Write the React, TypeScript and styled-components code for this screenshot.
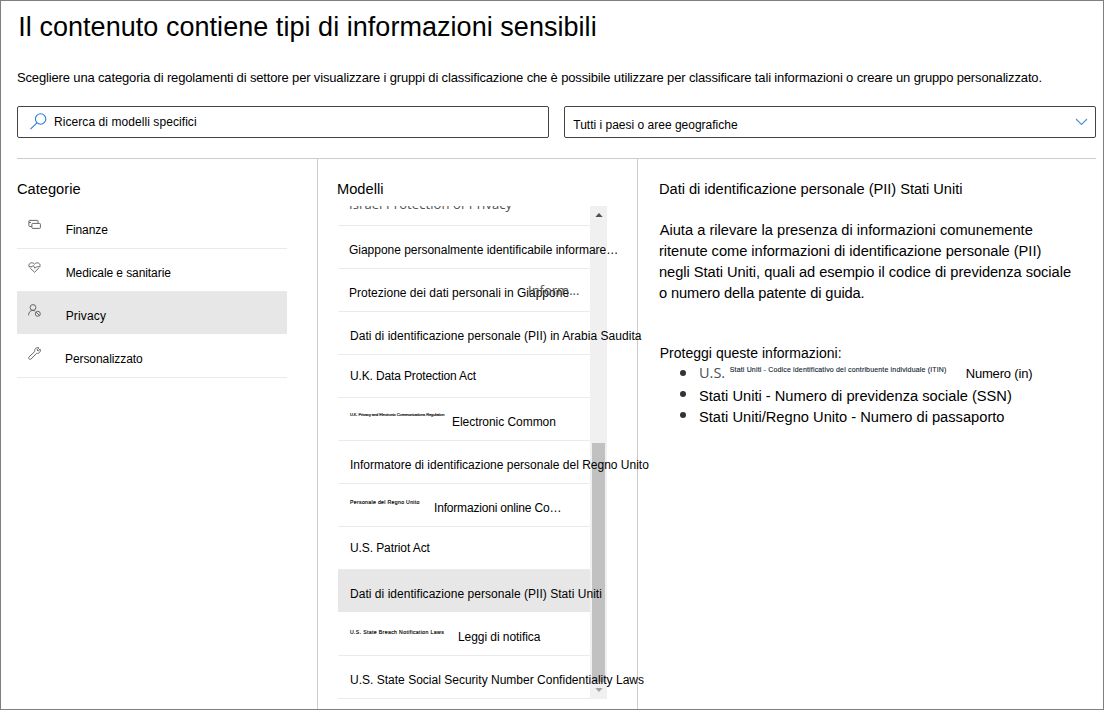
import React from 'react';
import styled, { createGlobalStyle } from 'styled-components';

const GlobalStyle = createGlobalStyle`
  *, *::before, *::after { box-sizing: border-box; }
  body {
    margin: 0;
    background: #fff;
    color: #000;
    font-family: "Liberation Sans", Arial, sans-serif;
  }
  svg { display: block; flex: none; }
`;

const Page = styled.div`
  width: 1104px;
  height: 710px;
  padding: 11px 7px 0 16px;
  border: 1px solid #7f7f7f;
  display: flex;
  flex-direction: column;
  overflow: hidden;
`;

const Title = styled.h1`
  margin: 0 0 0 1.3px;
  font-size: 27px;
  font-weight: 400;
  line-height: 30px;
  letter-spacing: 0.04px;
  white-space: nowrap;
`;

const Intro = styled.p`
  margin: 28px 0 0;
  font-size: 13px;
  line-height: 15px;
  letter-spacing: -0.15px;
  white-space: nowrap;
`;

const Filters = styled.div`
  margin-top: 21px;
  display: grid;
  grid-template-columns: 532px 532px;
  column-gap: 15px;
`;

const Field = styled.div`
  height: 32px;
  border: 1px solid #444;
  border-radius: 2px;
  display: flex;
  align-items: flex-start;
`;

const SearchField = styled(Field)`
  padding: 6px 0 0 12px;
  gap: 7px;
`;

const SelectField = styled(Field)`
  padding: 10px 7px 0 8.3px;
  justify-content: space-between;
`;

const Label = styled.span<{ $track?: number }>`
  font-size: 12px;
  line-height: 16px;
  letter-spacing: ${p => p.$track ?? 0}px;
  white-space: nowrap;
`;

const SearchLabel = styled(Label)`
  margin-top: 1px;
`;

const Columns = styled.main`
  margin-top: 20px;
  border-top: 1px solid #ccc;
  flex: 1;
  display: grid;
  grid-template-columns: 301px 320px 1fr;
`;

const Column = styled.section<{ $indent?: number }>`
  padding: 20px 0 0 ${p => p.$indent ?? 0}px;
  border-right: 1px solid #ccc;
  min-width: 0;
`;

const DetailColumn = styled(Column)`
  border-right: 0;
`;

const Heading = styled.h2<{ $shift?: number; $track?: number }>`
  margin: 0 0 0 ${p => p.$shift ?? 0}px;
  font-size: 14.67px;
  font-weight: 400;
  line-height: 21px;
  letter-spacing: ${p => p.$track ?? 0}px;
  white-space: nowrap;
`;

const CategoryList = styled.div`
  margin-top: 6px;
  width: 270px;
`;

const ListRow = styled.div<{ $selected?: boolean }>`
  height: 43px;
  display: flex;
  align-items: flex-start;
  background: ${p => (p.$selected ? '#e7e7e7' : 'transparent')};
  background-clip: padding-box;
  border-bottom: 1px solid ${p => (p.$selected ? 'transparent' : '#eaeaea')};
`;

const CategoryRow = styled(ListRow)<{ $textStart: number }>`
  padding: 12px 0 0 11px;
  gap: ${p => p.$textStart - 41}px;
  ${Label} { margin-top: 4px; }
`;

const ModelPanel = styled.div`
  margin-top: 6px;
  height: 493px;
  display: flex;
`;

/* Wider than its rows so that long names can run across the scrollbar. */
const ModelViewport = styled.div`
  flex: none;
  width: 320px;
  height: 493px;
  margin-right: -68px;
  overflow: hidden;
  position: relative;
  z-index: 1;
`;

const ModelRows = styled.div`
  width: 252px;
  margin-top: -23px;
`;

const ModelRow = styled(ListRow)<{ $top?: number; $left?: number }>`
  position: relative;
  padding: ${p => p.$top ?? 16}px 0 0 ${p => p.$left ?? 12}px;
`;

const FadedText = styled.span<{ $size: number; $track?: number }>`
  font-family: "Open Sans", "Noto Sans", sans-serif;
  font-size: ${p => p.$size}px;
  line-height: 18px;
  letter-spacing: ${p => p.$track ?? 0}px;
  color: #505050;
  white-space: nowrap;
`;

const OverlaidText = styled(FadedText)`
  position: absolute;
  left: 190px;
  top: 12px;
`;

const TinyText = styled.span<{ $size: number; $track: number; $top: number; $width: number }>`
  flex: none;
  width: ${p => p.$width}px;
  margin-top: ${p => p.$top}px;
  font-size: ${p => p.$size}px;
  line-height: 6px;
  letter-spacing: ${p => p.$track}px;
  -webkit-text-stroke: 0.15px #000;
  white-space: nowrap;
`;

const Scrollbar = styled.div`
  flex: none;
  width: 17px;
  background: #f0f0f0;
  display: flex;
  flex-direction: column;
  align-items: center;
`;

const Thumb = styled.div`
  margin-top: 226px;
  width: 13px;
  height: 239px;
  background: #c1c1c1;
`;

const Paragraph = styled.p`
  margin: 20px 0 0;
  font-size: 14.67px;
  line-height: 21px;
`;

const Line = styled.span<{ $track: number; $shift?: number }>`
  display: block;
  padding-left: ${p => p.$shift ?? 0}px;
  letter-spacing: ${p => p.$track}px;
  white-space: nowrap;
`;

const Subheading = styled.h3`
  margin: 41px 0 2px 0.7px;
  font-size: 14px;
  font-weight: 400;
  line-height: 16px;
  letter-spacing: 0.02px;
`;

const Bullets = styled.ul`
  list-style: none;
  margin: 0;
  padding: 0 0 0 21px;
`;

const Bullet = styled.li<{ $height?: number; $dot?: number }>`
  height: ${p => p.$height ?? 21}px;
  display: flex;
  align-items: flex-start;
  font-size: 14.67px;
  line-height: 21px;
  white-space: nowrap;
  &::before {
    content: "";
    flex: none;
    width: 6px;
    height: 6px;
    margin: ${p => p.$dot ?? 5}px 13px 0 0;
    border-radius: 50%;
    background: #333;
  }
`;

const Prefix = styled(FadedText)`
  width: 30.7px;
  margin-top: 1px;
`;

const Fine = styled.span`
  width: 236px;
  margin-top: 3px;
  font-size: 7px;
  line-height: 8px;
  letter-spacing: 0.166px;
  color: #0b1a2c;
  -webkit-text-stroke: 0.1px #0b1a2c;
`;

const Trailing = styled.span`
  margin-top: 3px;
  font-size: 13px;
  line-height: 15px;
  letter-spacing: -0.18px;
`;

const Glyph = ({ children }: { children: React.ReactNode }) => (
  <svg width="13" height="13" viewBox="0 0 13 13" fill="none" stroke="#606060" strokeWidth="0.95">
    {children}
  </svg>
);

const CardsIcon = () => (
  <Glyph>
    <path d="M3.8 8.5H1.5Q.9 8.5.9 7.9V3Q.9 2.4 1.5 2.4H9.4Q10 2.4 10 3V4.9M.9 4.4H3" />
    <rect x="3.9" y="5.4" width="8.5" height="5" rx="0.8" />
  </Glyph>
);

const HeartIcon = () => (
  <Glyph>
    <path d="M1.2 5.7C-.2 2.7 3.7.1 6.5 3.2 9.3.1 13.2 2.7 11.8 5.7" />
    <path d="M2.3 7.2 6.5 11.2 10.7 7.2M.8 5.8H4L5.2 4.4 7 7.3 8.5 5.8H12.2" />
  </Glyph>
);

const PersonIcon = () => (
  <Glyph>
    <circle cx="5" cy="3.5" r="2.9" />
    <path d="M.6 11.3C.6 8.2 2.4 6.4 5 6.4Q6.3 6.4 7.2 7.1" />
    <circle cx="9.8" cy="9.8" r="2.5" />
    <path d="M8.1 8.1 11.5 11.5" />
  </Glyph>
);

const WrenchIcon = () => (
  <Glyph>
    <path d="M10.9.9C8.6-.1 6 1.9 6.8 4.5L1.1 9.8C-.3 11.3 1.7 13.3 3.2 11.9L8.6 6.3C11 7 13.2 4.4 12.1 2.1L10.1 4 8.9 2.9Z" />
  </Glyph>
);

const SearchIcon = () => (
  <svg width="17" height="18" viewBox="0 0 17 18" fill="none" stroke="#2b7cd3" strokeWidth="1.1">
    <circle cx="10.6" cy="6" r="5.2" />
    <path d="M6.9 9.8.5 16.2" />
  </svg>
);

const ChevronIcon = () => (
  <svg width="13" height="9" viewBox="0 0 13 9" fill="none" stroke="#4a93cf" strokeWidth="1.1">
    <path d="M1 2 6.5 7.5 12 2" />
  </svg>
);

const ArrowUp = () => (
  <svg width="8" height="11" viewBox="0 0 8 11" fill="#505050">
    <path d="M.3 11 4 7 7.7 11Z" />
  </svg>
);

const ArrowDown = () => (
  <svg width="8" height="11" viewBox="0 0 8 11" fill="#a3a3a3">
    <path d="M.3 6 4 10 7.7 6Z" />
  </svg>
);

const categories = [
  { name: 'Finanze', icon: <CardsIcon />, start: 65.7, track: -0.08 },
  { name: 'Medicale e sanitarie', icon: <HeartIcon />, start: 65.7, track: -0.08 },
  { name: 'Privacy', icon: <PersonIcon />, start: 65.7, track: 0.15, selected: true },
  { name: 'Personalizzato', icon: <WrenchIcon />, start: 65, track: -0.08 },
];

export default function App() {
  return (
    <>
      <GlobalStyle />
      <Page>
        <Title>Il contenuto contiene tipi di informazioni sensibili</Title>
        <Intro>
          Scegliere una categoria di regolamenti di settore per visualizzare i gruppi di classificazione che è
          possibile utilizzare per classificare tali informazioni o creare un gruppo personalizzato.
        </Intro>
        <Filters>
          <SearchField>
            <SearchIcon />
            <SearchLabel $track={0.07}>Ricerca di modelli specifici</SearchLabel>
          </SearchField>
          <SelectField>
            <Label>Tutti i paesi o aree geografiche</Label>
            <ChevronIcon />
          </SelectField>
        </Filters>
        <Columns>
          <Column>
            <Heading>Categorie</Heading>
            <CategoryList>
              {categories.map(c => (
                <CategoryRow key={c.name} $selected={c.selected} $textStart={c.start}>
                  {c.icon}
                  <Label $track={c.track}>{c.name}</Label>
                </CategoryRow>
              ))}
            </CategoryList>
          </Column>
          <Column $indent={20}>
            <Heading $shift={-1} $track={0}>Modelli</Heading>
            <ModelPanel>
              <ModelViewport>
                <ModelRows>
                  <ModelRow $top={12} $left={11}>
                    <FadedText $size={13} $track={0.08}>Israel Protection of Privacy</FadedText>
                  </ModelRow>
                  <ModelRow $left={11}>
                    <Label $track={-0.02}>Giappone personalmente identificabile informare…</Label>
                  </ModelRow>
                  <ModelRow $left={11}>
                    <Label $track={0.015}>Protezione dei dati personali in Giappone</Label>
                    <OverlaidText $size={13}>Inform...</OverlaidText>
                  </ModelRow>
                  <ModelRow>
                    <Label $track={0.035}>Dati di identificazione personale (PII) in Arabia Saudita</Label>
                  </ModelRow>
                  <ModelRow $top={13}>
                    <Label $track={-0.14}>U.K. Data Protection Act</Label>
                  </ModelRow>
                  <ModelRow>
                    <TinyText $size={4} $track={-0.1} $top={-2} $width={102}>
                      U.K. Privacy and Electronic Communications Regulation
                    </TinyText>
                    <Label $track={-0.05}>Electronic Common</Label>
                  </ModelRow>
                  <ModelRow>
                    <Label>Informatore di identificazione personale del Regno Unito</Label>
                  </ModelRow>
                  <ModelRow>
                    <TinyText $size={5.2} $track={0.31} $top={-1} $width={84}>
                      Personale del Regno Unito
                    </TinyText>
                    <Label $track={-0.18}>Informazioni online Co…</Label>
                  </ModelRow>
                  <ModelRow $top={13}>
                    <Label $track={-0.1}>U.S. Patriot Act</Label>
                  </ModelRow>
                  <ModelRow $selected>
                    <Label $track={0.035}>Dati di identificazione personale (PII) Stati Uniti</Label>
                  </ModelRow>
                  <ModelRow>
                    <TinyText $size={5.2} $track={0.34} $top={0} $width={108}>
                      U.S. State Breach Notification Laws
                    </TinyText>
                    <Label $track={-0.06}>Leggi di notifica</Label>
                  </ModelRow>
                  <ModelRow>
                    <Label $track={0.01}>U.S. State Social Security Number Confidentiality Laws</Label>
                  </ModelRow>
                </ModelRows>
              </ModelViewport>
              <Scrollbar>
                <ArrowUp />
                <Thumb />
                <ArrowDown />
              </Scrollbar>
            </ModelPanel>
          </Column>
          <DetailColumn $indent={21}>
            <Heading $track={-0.04}>Dati di identificazione personale (PII) Stati Uniti</Heading>
            <Paragraph>
              <Line $track={0} $shift={0.7}>Aiuta a rilevare la presenza di informazioni comunemente</Line>
              <Line $track={-0.037}>ritenute come informazioni di identificazione personale (PII)</Line>
              <Line $track={-0.04}>negli Stati Uniti, quali ad esempio il codice di previdenza sociale</Line>
              <Line $track={-0.12}>o numero della patente di guida.</Line>
            </Paragraph>
            <Subheading>Proteggi queste informazioni:</Subheading>
            <Bullets>
              <Bullet $height={23} $dot={7}>
                <Prefix $size={14.5}>U.S.</Prefix>
                <Fine>Stati Uniti - Codice identificativo del contribuente individuale (ITIN)</Fine>
                <Trailing>Numero (in)</Trailing>
              </Bullet>
              <Bullet>Stati Uniti - Numero di previdenza sociale (SSN)</Bullet>
              <Bullet>Stati Uniti/Regno Unito - Numero di passaporto</Bullet>
            </Bullets>
          </DetailColumn>
        </Columns>
      </Page>
    </>
  );
}
